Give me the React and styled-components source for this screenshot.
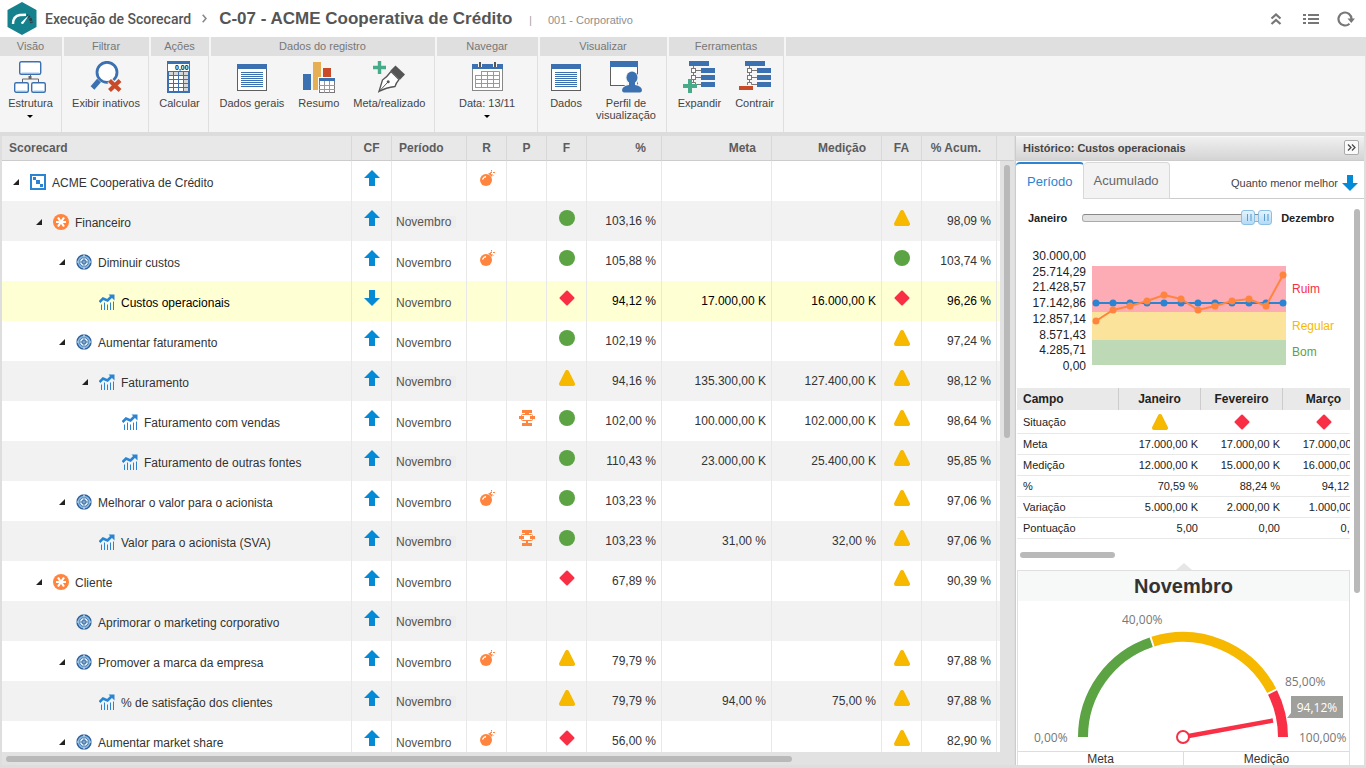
import * as React from 'react';
import styled, { createGlobalStyle, css } from 'styled-components';

const GlobalStyle = createGlobalStyle`
  * {
    box-sizing: border-box;
  }
  body {
    margin: 0;
    background: #fff;
    color: #333;
    font-family: "Liberation Sans", Arial, sans-serif;
    font-size: 12px;
  }
  button {
    font-family: inherit;
    margin: 0;
    padding: 0;
    border: 0;
    background: none;
    color: inherit;
    cursor: pointer;
  }
  svg {
    display: block;
    flex: none;
  }
`;

const colors = {
  green: '#5ba343',
  yellow: '#f6b900',
  red: '#f82f45',
  blue: '#3b71b0',
  link: '#2b84d2',
  orange: '#ff853f',
  arrow: '#058bd5',
};

/* ---------- layout ---------- */

const Page = styled.div`
  display: flex;
  flex-direction: column;
  height: 100vh;
  overflow: hidden;
`;

const TopBar = styled.header`
  display: flex;
  align-items: center;
  flex: none;
  height: 37px;
  padding: 0 10px 0 7px;
  color: #555;
  > svg {
    margin-right: 8px;
  }
`;

const AppName = styled.span`
  margin-top: 1px;
  font-family: Roboto, "Liberation Sans", sans-serif;
  font-size: 14px;
  font-weight: 500;
`;

const Chevron = styled.svg`
  && {
    margin: 0 12px 0 11px;
  }
`;

const RecordTitle = styled.h1`
  margin: 0;
  font-size: 17px;
  font-weight: bold;
`;

const Separator = styled.span`
  margin: 3px 16px 0 17px;
  font-size: 10px;
  color: #999;
`;

const RecordType = styled.span`
  margin-top: 3px;
  font-size: 11px;
  color: #8f8f8f;
`;

const TopActions = styled.div`
  display: flex;
  gap: 15px;
  margin-left: auto;
`;

const ToolBar = styled.nav`
  display: flex;
  flex: none;
  gap: 2px;
  height: 99px;
  background: #f5f5f5;
  border-bottom: 4px solid #dcdcdc;
`;

const Group = styled.section`
  display: flex;
  flex-direction: column;
  flex: ${p => (p.$fill ? '1' : 'none')};
  min-width: ${p => p.$width || 0}px;
  border-right: 1px solid #dfdfdf;
`;

const GroupTitle = styled.h2`
  margin: 0;
  height: 19px;
  background: #dfdfdf;
  color: #777;
  font-size: 11px;
  font-weight: normal;
  line-height: 19px;
  text-align: center;
`;

const GroupBody = styled.div`
  display: flex;
  justify-content: center;
  padding-top: 5px;
`;

const ToolButton = styled.button`
  display: flex;
  flex-direction: column;
  align-items: center;
  padding: 0 7px;
  font-size: 11px;
  line-height: 12px;
  color: #444;
  span {
    margin-top: 4px;
    white-space: pre-line;
  }
  i {
    margin-top: 6px;
    border: 3px solid transparent;
    border-top-color: #000;
    border-bottom: 0;
  }
`;

const Main = styled.main`
  display: flex;
  flex: 1;
  min-height: 0;
  padding: 0 2px 3px;
  background: #dedede;
`;

/* ---------- scorecard ---------- */

const GridPanel = styled.div`
  display: flex;
  flex-direction: column;
  flex: 1;
  min-width: 0;
  position: relative;
  padding-right: 1px;
`;

const GridScroll = styled.div`
  flex: 1;
  min-height: 0;
  overflow: hidden;
  background: #fff;
`;

const Grid = styled.table`
  width: 100%;
  table-layout: fixed;
  border-collapse: separate;
  border-spacing: 0;
`;

const HeadCell = styled.th`
  height: 25px;
  padding: 0 ${p => (p.$align === 'right' ? '15px' : '0')} 0 ${p => (p.$align === 'left' ? '7px' : '0')};
  background: #e8e8e8;
  border-right: 1px solid #d8d8d8;
  border-bottom: 1px solid #ccc;
  color: #5c5c5c;
  font-size: 12px;
  line-height: 24px;
  text-align: ${p => p.$align || 'center'};
  white-space: nowrap;
  &:last-child {
    border-right: 0;
  }
`;

const Cell = styled.td`
  height: 40px;
  padding: 13px 5px 0 4px;
  border-right: 1px solid #e8e8e8;
  line-height: 14px;
  text-align: right;
  vertical-align: top;
  white-space: nowrap;
  &:last-child {
    border-right: 0;
  }
`;

const IconCell = styled(Cell)`
  padding: 9px 0 0;
  svg {
    margin: 0 auto;
  }
`;

const PeriodCell = styled(Cell)`
  padding-top: 15px;
  color: #555;
  text-align: left;
`;

const PeriodValue = styled.span`
  display: block;
  width: 60px;
  line-height: 14px;
`;

const Row = styled.tr`
  background: #fff;
  &:nth-child(even) {
    background: #f2f2f2;
  }
  &:nth-child(even) ${PeriodValue} {
    background: #eee;
    line-height: 12px;
  }
  ${p => p.$selected && css`
    && {
      background: #ffffd4;
      color: #000;
    }
    && ${PeriodValue} {
      background: none;
      line-height: 14px;
    }
  `}
`;

const TreeCell = styled(Cell)`
  padding: 13px 0 0 ${p => 11 + p.$level * 23}px;
`;

const TreeNode = styled.div`
  display: flex;
  align-items: center;
  height: 17px;
  svg {
    margin-bottom: 1px;
  }
  > span {
    margin-left: 6px;
    padding-top: 1px;
  }
`;

const Toggle = styled.button`
  width: 6px;
  height: 8px;
  margin-right: 11px;
`;

const TogglePlaceholder = styled.span`
  && {
    width: 11px;
  }
`;

const VerticalTrack = styled.div`
  position: absolute;
  top: 25px;
  right: 1px;
  bottom: 13px;
  width: 14px;
  padding: 4px;
  background: #e2e2e2;
`;

const Thumb = styled.div`
  width: ${p => p.$width || '6px'};
  height: ${p => p.$height || '6px'};
  border-radius: 3px;
  background: #b9b9b9;
`;

const HorizontalTrack = styled.div`
  flex: none;
  height: 13px;
  padding: 4px;
  background: #e2e2e2;
`;

/* ---------- history panel ---------- */

const SidePanel = styled.aside`
  display: flex;
  flex-direction: column;
  flex: none;
  width: 349px;
  border-left: 1px solid #ccc;
  background: #fff;
`;

const PanelHeader = styled.header`
  display: flex;
  flex: none;
  align-items: center;
  justify-content: space-between;
  height: 25px;
  padding: 0 5px 2px 7px;
  border-top: 1px solid #f8f8f8;
  border-bottom: 1px solid #ccc;
  background: linear-gradient(#f0f0f0, #d4d4d4);
  h2 {
    margin: 0;
    color: #444;
    font-size: 11px;
  }
`;

const CollapseButton = styled.button`
  display: grid;
  place-items: center;
  width: 15px;
  height: 15px;
  border: 1px solid #aaa;
  border-radius: 2px;
  background: #fafafa;
`;

const Tabs = styled.div`
  display: flex;
  flex: none;
  height: 38px;
  padding-top: 1px;
  border-bottom: 1px solid #ccc;
`;

const Tab = styled.button`
  height: 37px;
  padding: 0 10px;
  font-size: 13px;
  border: 1px solid #d8d8d8;
  border-left: 0;
  border-radius: 4px 4px 0 0;
  background: #f3f3f3;
  color: #666;
  ${p => p.$active && css`
    padding-left: 11px;
    border-top: 2px solid ${colors.link};
    border-bottom: 0;
    background: #fff;
    color: ${colors.link};
  `}
`;

const Polarity = styled.div`
  display: flex;
  align-items: center;
  gap: 4px;
  margin-left: auto;
  padding: 6px 6px 0 0;
  color: #444;
  font-size: 11px;
`;

const PanelBody = styled.div`
  display: flex;
  flex: 1;
  min-height: 0;
  overflow: hidden;
  padding-left: 1px;
`;

const PanelContent = styled.div`
  flex: 1;
  min-width: 0;
`;

const PanelScroll = styled.div`
  flex: none;
  width: 14px;
  padding: 10px 4px;
`;

const Range = styled.div`
  display: flex;
  align-items: center;
  gap: 9px;
  padding: 10px 0 0 11px;
  font-size: 11px;
  font-weight: bold;
  color: #222;
  label:first-child {
    margin-right: 6px;
  }
`;

const RangeTrack = styled.div`
  position: relative;
  width: 190px;
  height: 17px;
  &:before {
    content: '';
    position: absolute;
    top: 5px;
    left: 0;
    right: 0;
    height: 6px;
    border: 1px solid #aaa;
    border-top-color: #888;
    border-radius: 3px;
    background: #e2e2e2;
  }
`;

const RangeInput = styled.input`
  position: absolute;
  top: 0;
  left: 0;
  width: 100%;
  height: 17px;
  margin: 0;
  appearance: none;
  background: none;
  pointer-events: none;
  &::-webkit-slider-thumb {
    appearance: none;
    width: 14px;
    height: 15px;
    border: 1px solid #8cbfe4;
    border-radius: 3px;
    background:
      linear-gradient(#5b9ccb, #5b9ccb) 5px 3px / 1px 7px no-repeat,
      linear-gradient(#8fc0e2, #8fc0e2) 8px 3px / 2px 7px no-repeat,
      linear-gradient(#e4f3fd, #b5dbf6);
    pointer-events: auto;
  }
`;

const Chart = styled.div`
  display: flex;
  padding: 23px 0 15px;
`;

const AxisLabels = styled.ol`
  display: flex;
  flex-direction: column;
  justify-content: space-between;
  width: 69px;
  height: 124px;
  margin: 0 6px 0 0;
  padding: 0;
  list-style: none;
  color: #222;
  line-height: 14px;
  text-align: right;
`;

const Plot = styled.div`
  padding-top: 17px;
`;

const Bands = styled.div`
  display: flex;
  flex-direction: column;
  margin-left: 6px;
  padding-top: 17px;
`;

const Band = styled.span`
  height: ${p => p.$height}px;
  line-height: ${p => p.$height}px;
  color: ${p => p.color};
`;

const TableScroll = styled.div`
  overflow: hidden;
`;

const MonthTable = styled.table`
  width: 348px;
  table-layout: fixed;
  border-collapse: separate;
  border-spacing: 0;
  color: #222;
  font-size: 11px;
  th, td {
    padding: 0 3px 0 0;
    text-align: right;
    white-space: nowrap;
  }
  thead th {
    height: 22px;
    padding: 0;
    border-right: 1px solid #ccc;
    background: #e9e9e9;
    font-size: 12px;
    text-align: center;
  }
  tbody th, tbody td {
    height: 21px;
    border-bottom: 1px solid #e8e8e8;
  }
  tbody tr:first-child > * {
    height: 24px;
    padding-right: 0;
  }
  tbody svg {
    margin: 1px auto 0;
  }
  tbody th, thead th:first-child {
    padding-left: 6px;
    font-weight: normal;
    text-align: left;
  }
  thead th:first-child {
    font-weight: bold;
  }
`;

const MonthScroll = styled.div`
  padding: 13px 3px 5px;
`;

const Pointer = styled.div`
  width: 0;
  margin: 0 auto;
  border: 8px solid transparent;
  border-top: 0;
  border-bottom: 7px solid #e6e6e6;
`;

const GaugeBox = styled.section`
  border: 1px solid #e0e0e0;
  h3 {
    margin: 0;
    background: #f7f8f8;
    color: #333;
    font-size: 20px;
    line-height: 30px;
    text-align: center;
  }
`;

const GaugeSvg = styled.svg`
  width: 100%;
  height: 150px;
  font-family: "Open Sans", "Noto Sans", sans-serif;
  font-size: 12px;
`;

const GaugeFooter = styled.div`
  display: flex;
  border-top: 1px solid #ddd;
  font-size: 12px;
  line-height: 15px;
  text-align: center;
  span {
    flex: 1;
  }
  span + span {
    border-left: 1px solid #ddd;
  }
`;

const TopButton = styled.button`
  display: grid;
  place-items: center;
  width: 20px;
  height: 20px;
`;

/* ---------- toolbar icons ---------- */

const Icon32 = ({ children }) => (
  <svg width="32" height="32" viewBox="0 0 32 32" fill="none">{children}</svg>
);

const StructureIcon = () => (
  <Icon32>
    <path d="M8.5 22V18H24.5V22M16.5 13V18" stroke="#666" />
    <rect x="14.5" y="15" width="3" height="3" fill="#666" />
    <g fill="#fff" stroke={colors.blue} strokeWidth="1.4">
      <rect x="5.7" y="0.7" width="21" height="12.6" rx="1.5" />
      <rect x="0.7" y="21.7" width="13.6" height="9.6" rx="1.5" />
      <rect x="17.7" y="21.7" width="13.6" height="9.6" rx="1.5" />
    </g>
    <path d="M7.5 11.5H25M2.5 29.5H12.5M19.5 29.5H29.5" stroke="#cfe4f7" />
  </Icon32>
);

const SearchOffIcon = () => (
  <Icon32>
    <circle cx="17" cy="11.3" r="10" fill="#fff" stroke={colors.blue} strokeWidth="2.8" />
    <path d="M9 19.5L2.5 27" stroke={colors.blue} strokeWidth="5" />
    <path d="M19.5 19.5L30 29.5M30 19.5L19.5 29.5" stroke="#f5f5f5" strokeWidth="6" />
    <path d="M19.5 19.5L30 29.5M30 19.5L19.5 29.5" stroke="#c94a28" strokeWidth="4.2" />
  </Icon32>
);

const CalculatorIcon = () => (
  <Icon32>
    <rect x="4" width="23" height="32" fill={colors.blue} />
    <rect x="5" y="3" width="21" height="7" fill="#fff" />
    <text x="12" y="9" fill="#111" fontSize="7" fontWeight="bold">0,00</text>
    {[0, 1, 2, 3, 4].map(r => [0, 1, 2, 3].map(c => (
      <rect key={r + '-' + c} x={6 + c * 5} y={11 + r * 4} width="4" height="3" fill={c === 3 || r === 0 ? '#d6d6d6' : '#fff'} />
    )))}
  </Icon32>
);

const SheetIcon = () => (
  <Icon32>
    <rect x="1.5" y="4.5" width="29" height="25" fill="#fff" stroke="#5f5f5f" />
    <rect x="1" y="3" width="30" height="5" fill={colors.blue} />
    {[0, 1, 2, 3, 4, 5, 6, 7].map(i => (
      <rect key={i} x="5" y={11 + i * 2} width="22" height="1" fill={colors.blue} />
    ))}
  </Icon32>
);

const SummaryIcon = () => (
  <Icon32>
    <rect x="0" y="13" width="8" height="16" fill={colors.blue} />
    <rect x="10" y="1" width="8" height="28" fill="#e6ae55" />
    <rect x="20" y="7" width="8" height="9" fill="#c94a28" />
    <rect x="15" y="16" width="17" height="16" fill="#fff" />
    <rect x="16.5" y="18.5" width="15" height="13" fill="#fff" stroke="#777" />
    <path d="M16 24.5H32M16 28.5H32M21.5 20V32M26.5 20V32" stroke="#999" />
    <rect x="16" y="17" width="16" height="3" fill={colors.blue} />
  </Icon32>
);

const PenIcon = () => (
  <Icon32>
    <path d="M6.5 0V13M0 6.5H13" stroke="#47ab89" strokeWidth="3.4" />
    <path d="M6 30.5L9.5 19Q14 16 18 10.5L26 18.5Q23 22 22 25.5Q13 26.5 6 30.5Z" fill="#fff" stroke="#555" strokeWidth="1.3" />
    <path d="M6 30.5L14.5 21.5" stroke="#555" />
    <circle cx="15.2" cy="20.8" r="1.5" fill="#555" />
    <path d="M22.5 4.5L32 13.5L27 18.7L17.5 9.5Z" fill="#555" />
  </Icon32>
);

const CalendarIcon = () => (
  <Icon32>
    <rect x="1.5" y="3.5" width="30" height="26" fill="#fff" stroke="#888" />
    <rect x="1" y="3" width="31" height="5" fill={colors.blue} />
    <path d="M9 1V6M24 1V6" stroke="#f5f5f5" strokeWidth="4" />
    <path d="M9 1V6M24 1V6" stroke="#555" strokeWidth="2" />
    <path d="M10.5 10.5H28.5V22.5M4.5 14.5H28.5M4.5 18.5H28.5M4.5 22.5H28.5M4.5 26.5H22.5M4.5 14V27M10.5 10V27M16.5 10V27M22.5 10V27M28.5 22V26.5H22" stroke="#999" />
  </Icon32>
);

const ProfileIcon = () => (
  <Icon32>
    <rect x="0.5" y="0.5" width="27" height="24" fill="#fff" stroke="#5f5f5f" />
    <rect width="28" height="6" fill={colors.blue} />
    <path d="M11 32V27L17 23L15 17Q16 10 22 10Q28 11 29 17L27 23L32 26V32Z" fill="#f5f5f5" />
    <ellipse cx="22" cy="16.5" rx="5.500" ry="6" fill={colors.blue} />
    <path d="M19 20H25V24Q32 25 32 29.500Q31.500 31.500 30 31.500H14Q12.500 31.500 12 29.500Q12 25 19 24Z" fill={colors.blue} />
  </Icon32>
);

const TreeToolIcon = ({ plus }) => (
  <Icon32>
    <path d="M10.5 5V22M12 9.500H18M12 16.500H18" stroke="#777" />
    <rect x="6" width="20" height="5" fill={colors.blue} />
    <rect x="18" y="7" width="14" height="5" fill={colors.blue} />
    <rect x="18" y="14" width="14" height="5" fill={colors.blue} />
    <rect x="18" y="21" width="14" height="5" fill={colors.blue} />
    <rect x="8.500" y="7.500" width="4" height="4" fill="#fff" stroke="#777" />
    <rect x="8.500" y="14.500" width="4" height="4" fill="#fff" stroke="#777" />
    <path d="M8.500 24V21.500H12.500V23.500H18" stroke="#777" />
    {plus
      ? <path d="M7 18V32M0 25H14" stroke="#47ab89" strokeWidth="4" />
      : <path d="M0 27H14" stroke="#c94a28" strokeWidth="4" />}
  </Icon32>
);

/* ---------- grid icons ---------- */

const Icon16 = ({ children }) => (
  <svg width="16" height="16" viewBox="0 0 16 16" fill="none">{children}</svg>
);

const Arrow = ({ down }) => (
  <Icon16>
    <path d={down ? 'M5 0H11V8H16L8 16L0 8H5Z' : 'M5 16H11V8H16L8 0L0 8H5Z'} fill={colors.arrow} />
  </Icon16>
);

const Status = ({ type }) => (
  <Icon16>
    {type === 'g' && <circle cx="8" cy="8" r="8" fill={colors.green} />}
    {type === 'y' && <path d="M8 2L14 14H2Z" fill={colors.yellow} stroke={colors.yellow} strokeWidth="4" strokeLinejoin="round" />}
    {type === 'r' && <path d="M8 1.500L14.500 8L8 14.500L1.500 8Z" fill={colors.red} stroke={colors.red} strokeWidth="2" strokeLinejoin="round" />}
  </Icon16>
);

const Bomb = () => (
  <Icon16>
    <circle cx="7" cy="10" r="6" fill={colors.orange} />
    <path d="M9 3.500L13 7L13.500 5L11 3Z" fill={colors.orange} />
    <path d="M3.500 9.500Q4.500 7 7 6.500" stroke="#fff" strokeWidth="1.300" />
    <path d="M11.500 4V2.500H13M12.500 0V1.500M14 2.500H16M13.500 4.500L14.500 5.500" stroke={colors.orange} />
  </Icon16>
);

const Process = () => (
  <Icon16>
    <path d="M3 0H13V3H10V4H6V3H3ZM7 11H9V13H13V16H3V13H7Z" fill={colors.orange} />
    <rect x="2.500" y="4.500" width="11" height="6" rx="1" fill="#fff" stroke={colors.orange} />
    <path d="M0 6H5V9H0ZM11 6H16V9H11Z" fill={colors.orange} />
  </Icon16>
);

const NodeIcon = ({ kind }) => {
  if (kind === 'root') {
    return (
      <Icon16>
        <rect x="1" y="1" width="14" height="14" fill="#fff" stroke={colors.link} strokeWidth="2" />
        <path d="M3 3H6V6H3ZM6 6H10V10H6ZM10 10H13V13H10Z" fill={colors.link} />
      </Icon16>
    );
  }
  if (kind === 'perspective') {
    return (
      <Icon16>
        <circle cx="8" cy="8" r="8" fill={colors.orange} />
        <path d="M5 3.500L11 12.500M11 3.500L5 12.500M3 8H13" stroke="#fff" strokeWidth="2.200" />
      </Icon16>
    );
  }
  if (kind === 'objective') {
    return (
      <Icon16>
        <circle cx="8" cy="8" r="7" fill="#8db8de" stroke="#2c629c" strokeWidth="1.400" />
        <circle cx="8" cy="8" r="4.500" fill="#d9e9f7" stroke="#3f79b5" />
        <path d="M8 0.500V15.500M0.500 8H15.500" stroke="#d9e9f7" strokeWidth="1.200" />
        <circle cx="8" cy="8" r="2" fill="#fff" stroke="#2c629c" />
        <path d="M8 2.500V13.500M2.500 8H13.500" stroke="#2c629c" strokeWidth="0.700" />
      </Icon16>
    );
  }
  return (
    <Icon16>
      <path d="M0.500 8L4 4.500L8.500 6.500L13 2" stroke={colors.link} strokeWidth="2.600" />
      <path d="M9.500 0.500H15.500V6.500Z" fill={colors.link} />
      <path d="M2.500 10.500V16M5.500 8.500V16M8.500 10.500V16M11.500 8.500V16M14.500 7.500V16" stroke={colors.link} />
    </Icon16>
  );
};

/* ---------- data ---------- */

const groups = [
  { title: 'Visão', width: 62, items: [{ label: 'Estrutura', icon: <StructureIcon />, menu: true }] },
  { title: 'Filtrar', width: 85, items: [{ label: 'Exibir inativos', icon: <SearchOffIcon /> }] },
  { title: 'Ações', width: 58, items: [{ label: 'Calcular', icon: <CalculatorIcon /> }] },
  {
    title: 'Dados do registro',
    width: 224,
    items: [
      { label: 'Dados gerais', icon: <SheetIcon /> },
      { label: 'Resumo', icon: <SummaryIcon /> },
      { label: 'Meta/realizado', icon: <PenIcon /> },
    ],
  },
  { title: 'Navegar', width: 101, items: [{ label: 'Data: 13/11', icon: <CalendarIcon />, menu: true }] },
  {
    title: 'Visualizar',
    width: 127,
    items: [
      { label: 'Dados', icon: <SheetIcon /> },
      { label: 'Perfil de\nvisualização', icon: <ProfileIcon /> },
    ],
  },
  {
    title: 'Ferramentas',
    width: 115,
    items: [
      { label: 'Expandir', icon: <TreeToolIcon plus /> },
      { label: 'Contrair', icon: <TreeToolIcon /> },
    ],
  },
];

const columns = [
  { title: 'Scorecard', width: 350, align: 'left' },
  { title: 'CF', width: 40 },
  { title: 'Período', width: 75, align: 'left' },
  { title: 'R', width: 40 },
  { title: 'P', width: 40 },
  { title: 'F', width: 40 },
  { title: '%', width: 75, align: 'right' },
  { title: 'Meta', width: 110, align: 'right' },
  { title: 'Medição', width: 110, align: 'right' },
  { title: 'FA', width: 40 },
  { title: '% Acum.', width: 75, align: 'right' },
  { title: '' },
];

const rows = [
  { name: 'ACME Cooperativa de Crédito', kind: 'root', level: 0, open: true, bomb: true, noPeriod: true },
  { name: 'Financeiro', kind: 'perspective', level: 1, open: true, f: 'g', pct: '103,16 %', fa: 'y', acum: '98,09 %' },
  { name: 'Diminuir custos', kind: 'objective', level: 2, open: true, bomb: true, f: 'g', pct: '105,88 %', fa: 'g', acum: '103,74 %' },
  { name: 'Custos operacionais', kind: 'indicator', level: 3, down: true, selected: true, f: 'r', pct: '94,12 %', meta: '17.000,00 K', value: '16.000,00 K', fa: 'r', acum: '96,26 %' },
  { name: 'Aumentar faturamento', kind: 'objective', level: 2, open: true, f: 'g', pct: '102,19 %', fa: 'y', acum: '97,24 %' },
  { name: 'Faturamento', kind: 'indicator', level: 3, open: true, f: 'y', pct: '94,16 %', meta: '135.300,00 K', value: '127.400,00 K', fa: 'y', acum: '98,12 %' },
  { name: 'Faturamento com vendas', kind: 'indicator', level: 4, process: true, f: 'g', pct: '102,00 %', meta: '100.000,00 K', value: '102.000,00 K', fa: 'y', acum: '98,64 %' },
  { name: 'Faturamento de outras fontes', kind: 'indicator', level: 4, f: 'g', pct: '110,43 %', meta: '23.000,00 K', value: '25.400,00 K', fa: 'y', acum: '95,85 %' },
  { name: 'Melhorar o valor para o acionista', kind: 'objective', level: 2, open: true, bomb: true, f: 'g', pct: '103,23 %', fa: 'y', acum: '97,06 %' },
  { name: 'Valor para o acionista (SVA)', kind: 'indicator', level: 3, process: true, f: 'g', pct: '103,23 %', meta: '31,00 %', value: '32,00 %', fa: 'y', acum: '97,06 %' },
  { name: 'Cliente', kind: 'perspective', level: 1, open: true, f: 'r', pct: '67,89 %', fa: 'y', acum: '90,39 %' },
  { name: 'Aprimorar o marketing corporativo', kind: 'objective', level: 2 },
  { name: 'Promover a marca da empresa', kind: 'objective', level: 2, open: true, bomb: true, f: 'y', pct: '79,79 %', fa: 'y', acum: '97,88 %' },
  { name: '% de satisfação dos clientes', kind: 'indicator', level: 3, f: 'y', pct: '79,79 %', meta: '94,00 %', value: '75,00 %', fa: 'y', acum: '97,88 %' },
  { name: 'Aumentar market share', kind: 'objective', level: 2, open: true, bomb: true, f: 'r', pct: '56,00 %', fa: 'y', acum: '82,90 %' },
];

const axis = ['30.000,00', '25.714,29', '21.428,57', '17.142,86', '12.857,14', '8.571,43', '4.285,71', '0,00'];
const measured = [55, 44, 40, 35, 29, 33, 44, 40, 35, 33, 40, 9];

const months = [
  { field: 'Meta', values: ['17.000,00 K', '17.000,00 K', '17.000,00 K'] },
  { field: 'Medição', values: ['12.000,00 K', '15.000,00 K', '16.000,00 K'] },
  { field: '%', values: ['70,59 %', '88,24 %', '94,12 %'] },
  { field: 'Variação', values: ['5.000,00 K', '2.000,00 K', '1.000,00 K'] },
  { field: 'Pontuação', values: ['5,00', '0,00', '0,00'] },
];

/* ---------- parts ---------- */

const Header = () => (
  <TopBar>
    <svg width="30" height="33" viewBox="0 0 30 33">
      <path d="M15 0L29.500 8V25L15 33L0.500 25V8Z" fill="#15818d" />
      <path d="M6 22Q6 14 13 13L19 12.700" fill="none" stroke="#fff" strokeWidth="2.400" />
      <path d="M20 13.500Q24 15.500 24.500 21" fill="none" stroke="#2f3f48" strokeWidth="2.800" strokeDasharray="3 1" />
      <path d="M22 13L16.500 21.500Q14.500 23 14 20.500Z" fill="#fff" />
    </svg>
    <AppName>Execução de Scorecard</AppName>
    <Chevron width="5" height="9" viewBox="0 0 5 9" fill="none" stroke="#888" strokeWidth="1.600">
      <path d="M0.700 0.700L4 4.500L0.700 8.300" />
    </Chevron>
    <RecordTitle>C-07 - ACME Cooperativa de Crédito</RecordTitle>
    <Separator>|</Separator>
    <RecordType>001 - Corporativo</RecordType>
    <TopActions>
      <TopButton aria-label="Recolher">
        <svg width="12" height="14" viewBox="0 0 12 14" fill="none" stroke="#777" strokeWidth="2.300">
          <path d="M1.500 6.500L6 2.500L10.500 6.500M1.500 12L6 8L10.500 12" />
        </svg>
      </TopButton>
      <TopButton aria-label="Lista">
        <svg width="16" height="12" viewBox="0 0 16 12" fill="#777">
          <path d="M0 1H3V3H0ZM5 1H16V3H5ZM0 5H3V7H0ZM5 5H16V7H5ZM0 9H3V11H0ZM5 9H16V11H5Z" />
        </svg>
      </TopButton>
      <TopButton aria-label="Atualizar">
        <svg width="18" height="16" viewBox="0 0 18 16">
          <path d="M12.500 12.700A6.500 6.500 0 1 1 14.500 8" fill="none" stroke="#777" strokeWidth="2.200" />
          <path d="M10.500 7.500H18L14.300 12Z" fill="#777" />
        </svg>
      </TopButton>
    </TopActions>
  </TopBar>
);

const Tools = () => (
  <ToolBar>
    {groups.map(group => (
      <Group key={group.title} $width={group.width}>
        <GroupTitle>{group.title}</GroupTitle>
        <GroupBody>
          {group.items.map(item => (
            <ToolButton key={item.label}>
              {item.icon}
              <span>{item.label}</span>
              {item.menu && <i />}
            </ToolButton>
          ))}
        </GroupBody>
      </Group>
    ))}
    <Group as="div" $fill>
      <GroupTitle as="div" />
    </Group>
  </ToolBar>
);

const ScorecardRow = ({ row }) => (
  <Row $selected={row.selected}>
    <TreeCell $level={row.level}>
      <TreeNode>
        {row.open ? (
          <Toggle aria-label={'Recolher ' + row.name}>
            <svg width="6" height="7" viewBox="0 0 6 7"><path d="M6 0V6H0Z" fill="#222" /></svg>
          </Toggle>
        ) : <TogglePlaceholder />}
        <NodeIcon kind={row.kind} />
        <span>{row.name}</span>
      </TreeNode>
    </TreeCell>
    <IconCell><Arrow down={row.down} /></IconCell>
    <PeriodCell>{!row.noPeriod && <PeriodValue>Novembro</PeriodValue>}</PeriodCell>
    <IconCell>{row.bomb && <Bomb />}</IconCell>
    <IconCell>{row.process && <Process />}</IconCell>
    <IconCell>{row.f && <Status type={row.f} />}</IconCell>
    <Cell>{row.pct}</Cell>
    <Cell>{row.meta}</Cell>
    <Cell>{row.value}</Cell>
    <IconCell>{row.fa && <Status type={row.fa} />}</IconCell>
    <Cell>{row.acum}</Cell>
    <Cell />
  </Row>
);

const Scorecard = () => (
  <GridPanel>
    <GridScroll>
      <Grid>
        <colgroup>
          {columns.map((col, i) => <col key={i} width={col.width} />)}
        </colgroup>
        <thead>
          <tr>
            {columns.map((col, i) => <HeadCell key={i} $align={col.align}>{col.title}</HeadCell>)}
          </tr>
        </thead>
        <tbody>
          {rows.map(row => <ScorecardRow key={row.name} row={row} />)}
        </tbody>
      </Grid>
    </GridScroll>
    <VerticalTrack><Thumb $height="273px" /></VerticalTrack>
    <HorizontalTrack><Thumb $width="786px" /></HorizontalTrack>
  </GridPanel>
);

const HistoryChart = () => (
  <Chart>
    <AxisLabels>
      {axis.map(v => <li key={v}>{v}</li>)}
    </AxisLabels>
    <Plot>
      <svg width="194" height="99" viewBox="0 0 194 99" overflow="visible">
        <rect width="194" height="46" fill="#fdabb5" />
        <rect y="46" width="194" height="28" fill="#fce39b" />
        <rect y="74" width="194" height="25" fill="#bed9b5" />
        <path d="M4 37H191" stroke={colors.link} strokeWidth="2" />
        {measured.map((y, i) => <circle key={i} cx={4 + i * 17} cy="37" r="3.500" fill={colors.link} />)}
        <polyline
          points={measured.map((y, i) => (4 + i * 17) + ',' + y).join(' ')}
          fill="none"
          stroke={colors.orange}
          strokeWidth="2"
        />
        {measured.map((y, i) => <circle key={i} cx={4 + i * 17} cy={y} r="3.500" fill={colors.orange} />)}
      </svg>
    </Plot>
    <Bands>
      <Band $height={46} color={colors.red}>Ruim</Band>
      <Band $height={28} color={colors.yellow}>Regular</Band>
      <Band $height={25} color={colors.green}>Bom</Band>
    </Bands>
  </Chart>
);

const arc = (from, to) => {
  const point = pct => {
    const a = Math.PI * (1 - pct / 100);
    return (165 + 100 * Math.cos(a)) + ' ' + (136 - 100 * Math.sin(a));
  };
  return 'M' + point(from) + 'A100 100 0 0 1 ' + point(to);
};

const Gauge = () => (
  <GaugeBox>
    <h3>Novembro</h3>
    <GaugeSvg viewBox="0 0 331 150">
      <g fill="none" strokeWidth="10">
        <path d={arc(0, 39.7)} stroke={colors.green} />
        <path d={arc(40.3, 84.7)} stroke={colors.yellow} />
        <path d={arc(85.3, 100)} stroke={colors.red} />
      </g>
      <path d="M165 136L255 119.500" stroke={colors.red} strokeWidth="4.500" />
      <circle cx="165" cy="136" r="6" fill="#fff" stroke={colors.red} strokeWidth="2" />
      <g fill="#777">
        <text x="16" y="141">0,00%</text>
        <text x="104" y="23">40,00%</text>
        <text x="267" y="85">85,00%</text>
        <text x="281" y="141">100,00%</text>
      </g>
      <path d="M273 95H325V117H269L273 112Z" fill="#9f9f9b" />
      <text x="299" y="111" fill="#fff" textAnchor="middle">94,12%</text>
    </GaugeSvg>
    <GaugeFooter>
      <span>Meta</span>
      <span>Medição</span>
    </GaugeFooter>
  </GaugeBox>
);

const History = () => {
  const [from, setFrom] = React.useState(90);
  const [to, setTo] = React.useState(100);

  return (
    <SidePanel>
      <PanelHeader>
        <h2>Histórico: Custos operacionais</h2>
        <CollapseButton aria-label="Recolher painel">
          <svg width="9" height="7" viewBox="0 0 9 7" fill="none" stroke="#444" strokeWidth="1.200">
            <path d="M1 0.500L4 3.500L1 6.500M5 0.500L8 3.500L5 6.500" />
          </svg>
        </CollapseButton>
      </PanelHeader>
      <Tabs role="tablist">
        <Tab role="tab" aria-selected="true" $active>Período</Tab>
        <Tab role="tab" aria-selected="false">Acumulado</Tab>
        <Polarity>Quanto menor melhor <Arrow down /></Polarity>
      </Tabs>
      <PanelBody>
        <PanelContent>
          <Range>
            <label htmlFor="from">Janeiro</label>
            <RangeTrack>
              <RangeInput id="from" type="range" value={from} onChange={e => setFrom(Number(e.target.value))} />
              <RangeInput id="to" type="range" value={to} onChange={e => setTo(Number(e.target.value))} />
            </RangeTrack>
            <label htmlFor="to">Dezembro</label>
          </Range>
          <HistoryChart />
          <TableScroll>
            <MonthTable>
              <colgroup>
                <col width="102" />
                <col width="82" />
                <col width="82" />
                <col width="82" />
              </colgroup>
              <thead>
                <tr>
                  <th>Campo</th>
                  <th>Janeiro</th>
                  <th>Fevereiro</th>
                  <th>Março</th>
                </tr>
              </thead>
              <tbody>
                <tr>
                  <th>Situação</th>
                  <td><Status type="y" /></td>
                  <td><Status type="r" /></td>
                  <td><Status type="r" /></td>
                </tr>
                {months.map(m => (
                  <tr key={m.field}>
                    <th>{m.field}</th>
                    {m.values.map((v, i) => <td key={i}>{v}</td>)}
                  </tr>
                ))}
              </tbody>
            </MonthTable>
          </TableScroll>
          <MonthScroll><Thumb $width="95px" /></MonthScroll>
          <Pointer />
          <Gauge />
        </PanelContent>
        <PanelScroll><Thumb $height="384px" /></PanelScroll>
      </PanelBody>
    </SidePanel>
  );
};

export default () => (
  <Page>
    <GlobalStyle />
    <Header />
    <Tools />
    <Main>
      <Scorecard />
      <History />
    </Main>
  </Page>
);
